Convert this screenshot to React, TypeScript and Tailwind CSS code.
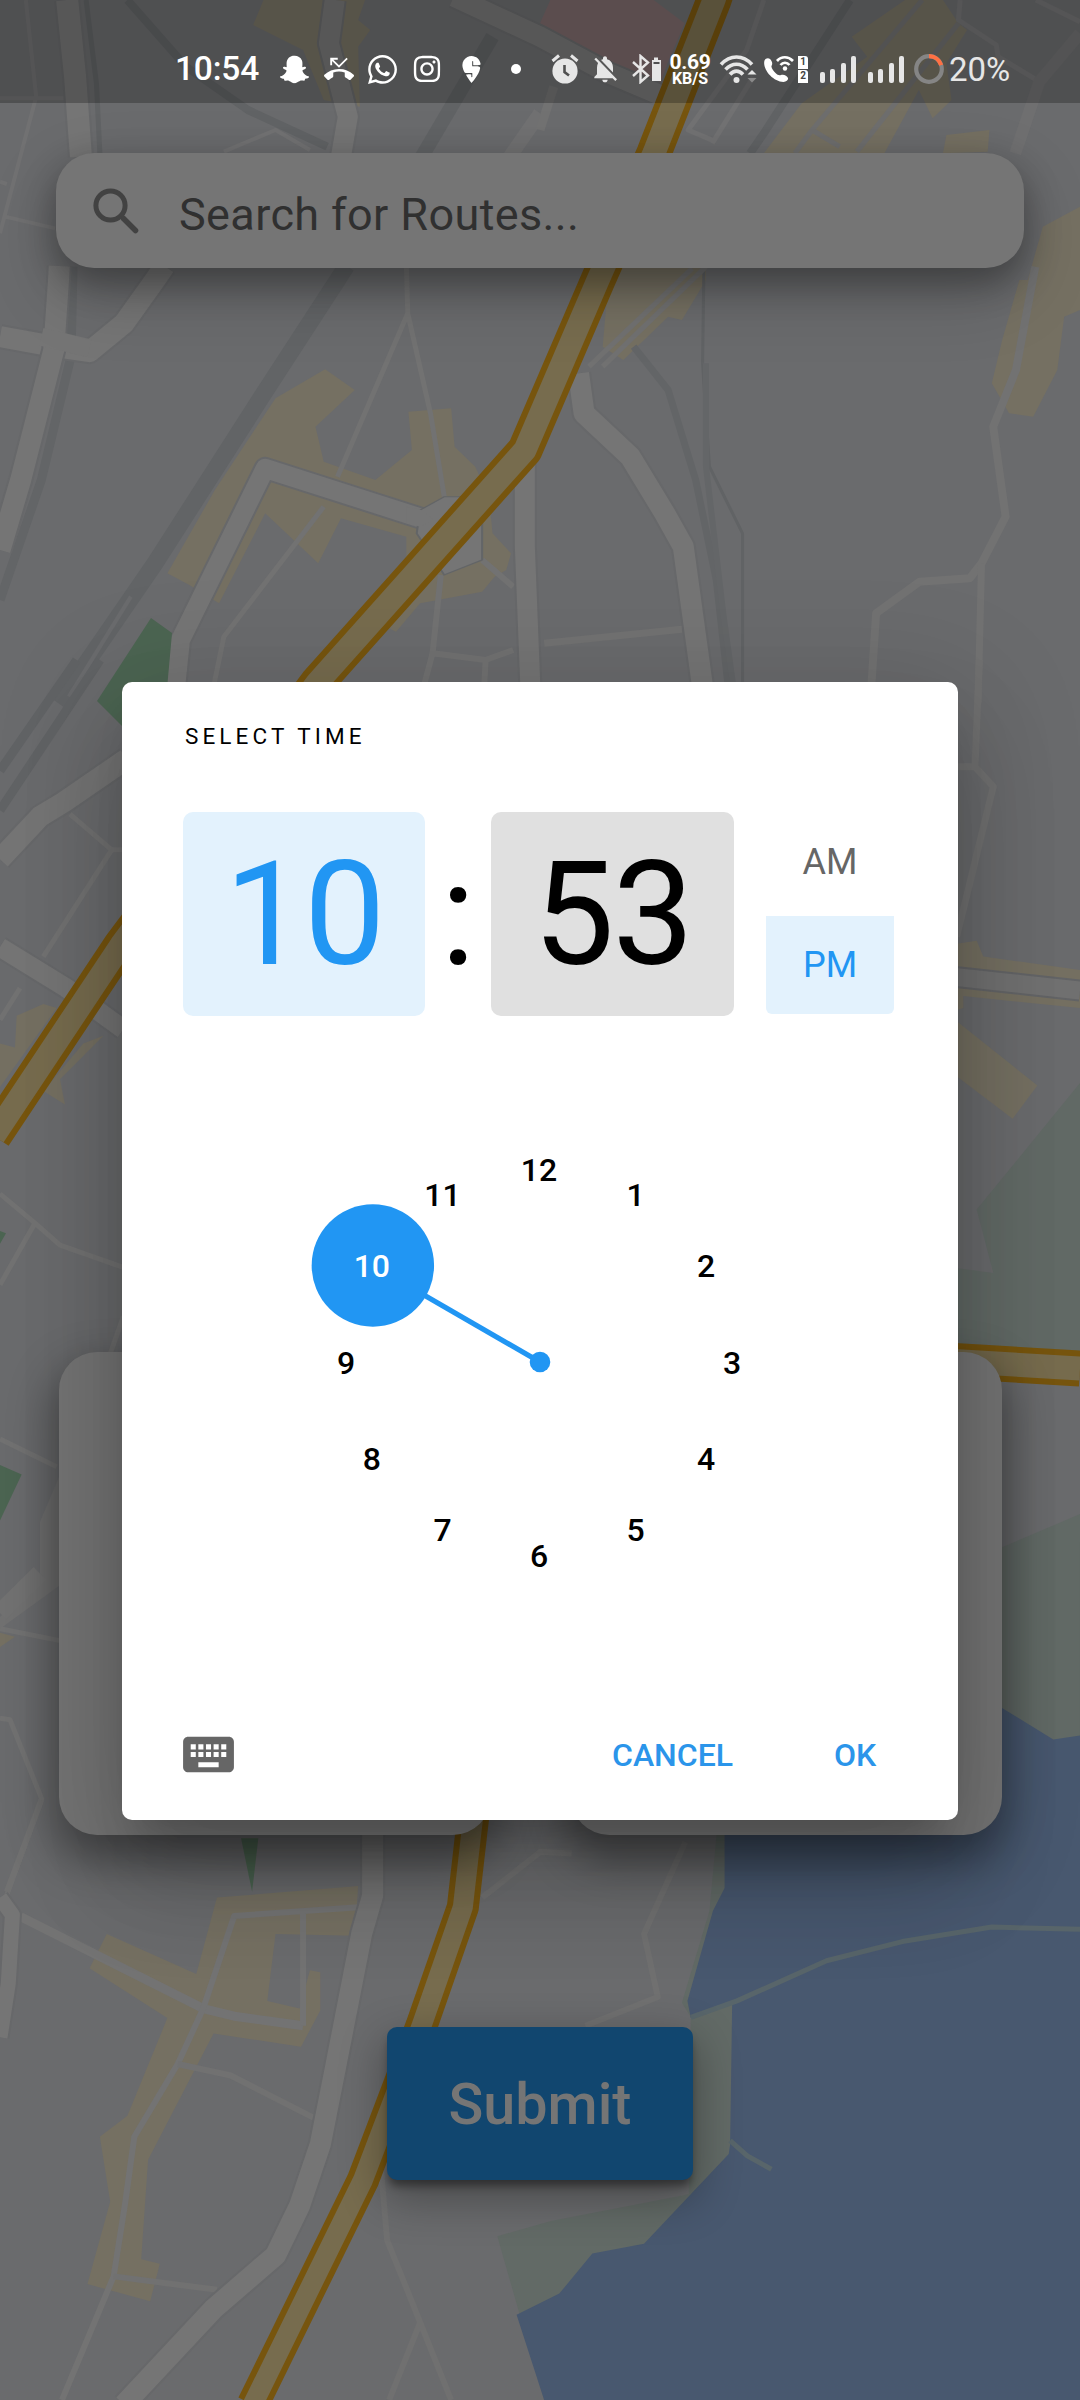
import React from "react";
import { FaSnapchatGhost, FaWhatsapp, FaInstagram } from "react-icons/fa";
import { MdPhoneMissed, MdNotificationsOff, MdKeyboard } from "react-icons/md";
import { SiSwiggy } from "react-icons/si";

const LAND = "#6a6b6d";
const ROAD = "#757575";
const EDGE = "#616365";
const BEIGE = "#757062";
const PARK = "#4c6552";
const PALE = "#626a66";
const WATER = "#48586f";

type LineProps = { d: string; w: number; c?: string };

function Line({ d, w, c = ROAD }: LineProps) {
  return (
    <path d={d} fill="none" stroke={c} strokeWidth={w} strokeLinejoin="round" vectorEffect="non-scaling-stroke" />
  );
}

function Street({ d, w }: LineProps) {
  return (
    <>
      <Line d={d} w={w + 4} c="#67686a" />
      <Line d={d} w={w} c="#757575" />
    </>
  );
}

function Highway({ d, w }: LineProps) {
  return (
    <>
      <Line d={d} w={w} c="#77550e" />
      <Line d={d} w={w - 12} c="#776c4e" />
    </>
  );
}

function MapTiles() {
  return (
    <svg className="absolute inset-0" width="1080" height="2400" viewBox="0 0 1080 2400" aria-hidden="true">
      <rect width="1080" height="2400" fill={LAND} />

      <g transform="scale(.34439 .33333)">
        <path d="M765 0H1060L1040 60 1075 90 1040 140 1045 320 940 300 880 150 735 75Z" fill={BEIGE} />
        <Line d="M75 0 105 290 0 700M0 295H185M0 545 20 552M15 650 160 685" w={4} c="#717172" />
        <Line d="M250 0 280 250 290 460" w={5} c={EDGE} />
        <Line d="M370 0 540 200 720 330 950 440" w={8} c={EDGE} />
        <Street d="M195 0 218 230 235 470" w={22} />
        <Street d="M972 0 955 130 1010 350 990 470" w={20} />
        <Line d="M650 455 800 390 900 450" w={4} c="#727273" />
        <Line d="M1430 110 1225 470" w={14} c={EDGE} />
        <Line d="M1568 340 1480 470" w={14} c="#717172" />
      </g>

      <g transform="translate(540 0) scale(.34439 .33333)">
        <path d="M0 70 30 0H330L420 70 370 190 340 280 200 190Z" fill="#7a6769" />
        <path
          d="M1060 0H1170L1215 70 1240 90 1180 190 1195 300 1140 355 1100 270 1000 460H650L760 310 950 170 905 110Z"
          fill={BEIGE}
        />
        <path d="M1180 405 1305 390 1300 455 1170 460Z" fill={BEIGE} />
        <path d="M1568 620 1460 680 1400 900H1568Z" fill={BEIGE} />
        <Street d="M-250 -10 0 110 200 220 360 290" w={20} />
        <Line d="M0 390 40 260" w={9} c="#727272" />
        <Line d="M650 0 600 150 430 390 510 425" w={5} c="#727273" />
        <Line d="M620 230 500 430" w={5} c="#727273" />
        <Line d="M1220 0 1215 60 1325 135 1330 170 1450 245M1440 0 1568 65" w={5} c="#727273" />
        <Line d="M1568 100 1450 245 1380 460" w={12} c="#6f6f70" />
        <Line d="M900 0 650 400 610 460" w={8} c={EDGE} />
        <Line d="M1110 0 790 390 740 460M790 390 870 440M1215 70 920 455" w={5} c="#6e6e6e" />
      </g>

      <g transform="translate(0 280) scale(.68878 .33333)">
        <Line d="M503 -42 490 0 380 350 225 850 85 1270" w={17} c="#626466" />
        <Line d="M190 950 100 1250" w={4} c={LAND} />
        <Line d="M106 -40 103 230 60 600 0 960" w={9} c="#636567" />
        <path
          d="M472 268 515 330 458 440 470 545 545 600 598 510 593 395 655 385 660 500 690 560 710 650 715 760 742 820 735 870 718 890 700 935 610 970 575 1055 560 1040 590 900 590 770 495 715 462 850 385 700 318 970 275 915 243 880 312 630 400 355Z"
          fill={BEIGE}
        />
        <path d="M885 -40H1025V0L990 120 970 110 905 240 875 200Z" fill={BEIGE} />
        <path d="M1480 0H1568V90L1545 110 1535 270 1500 410 1465 400 1440 310 1455 180Z" fill={BEIGE} />
        <Line d="M1022 -40 1020 250 1030 560 1078 760V1270" w={3} c="#616365" />
        <Line d="M920 200 970 330 1010 600 1040 900 1060 1270" w={7} c="#636567" />
        <Line d="M1025 250V560L1050 1000 1068 1270" w={6} c="#646668" />
        <Street d="M239 -42 225 0 180 130 130 215 80 200 0 170" w={21} />
        <Street d="M86 -42 85 0 78 210 30 600 0 810" w={21} />
        <Line d="M60 170 130 205" w={18} />
        <Line d="M590 -40 592 100 490 590M592 100 625 400 645 650M470 680 325 1070 310 1220" w={5} c="#727272" />
        <Line d="M640 885 628 1120 615 1220M628 1120 705 1140 745 1110M705 1140 703 1220M700 840 745 920" w={6} c="#727272" />
        <Street d="M255 1220 262 1080 385 565 612 715" w={19} />
        <path d="M610 690 645 650H700V840L645 885 605 760Z" fill={ROAD} stroke="#636567" strokeWidth="3" />
        <path d="M590 680 612 690 630 720 610 740 590 730Z" fill={ROAD} />
        <Street d="M762 540V800L770 1220" w={20} />
        <Street d="M840 280 848 400 915 530 965 700 992 800 1020 1220" w={21} />
        <Line d="M790 1090 990 1048" w={7} c="#727272" />
        <Line d="M855 260 1005 -35M875 260 1025 -40" w={5} c="#717171" />
        <Line d="M1503 -40 1475 270 1442 440 1460 710 1425 850 1408 895 1335 905 1272 1000 1265 1220" w={8} c="#727272" />
        <Line d="M1425 850 1420 1270" w={7} c="#727272" />
      </g>
      <path d="M151 618 172 633 166 700 123 727 97 701Z" fill={PARK} />

      <g transform="translate(0 660) scale(.33333 .79082)">
        <Line d="M0 140 230 0M0 190 300 0" w={9} c="#616365" />
        <Street d="M0 252 120 198 190 180 380 125" w={21} />
        <Line d="M210 195 335 240H370M335 240 130 375M0 455 60 415" w={5} c="#727272" />
        <path d="M50 450 130 435 170 440 0 540V485L45 490Z" fill={BEIGE} />
        <path d="M130 545 250 485 310 475 180 530 195 562Z" fill={BEIGE} />
        <Street d="M0 363 200 415 370 467" w={19} />
        <Line d="M0 675 105 712 180 740 370 768M105 712 0 790M0 985 170 1020" w={5} c="#727272" />
        <path d="M0 722 18 725 0 738Z" fill={PARK} />
        <path d="M0 1018 65 1030 0 1088Z" fill={PARK} />
        <path d="M0 1210 120 1160 120 1090 180 1030V1170L0 1225Z" fill="#717171" />
        <Line d="M0 1205 120 1155" w={18} c="#727272" />
        <Line d="M0 1225 180 1240M0 1338 30 1340 125 1440 15 1568M320 890 370 830" w={5} c="#727272" />
        <path d="M0 1230 45 1235 0 1248Z" fill={BEIGE} />
      </g>

      <g transform="translate(950 660) scale(.33333 .79082)">
        <path d="M390 535 80 695 130 775 0 768V870L390 875Z" fill={PALE} />
        <path d="M0 1150 390 1080V1365H0Z" fill={PALE} />
        <path d="M-680 1568V1290L155 1325 310 1365 390 1360V1568Z" fill={WATER} />
        <Line d="M88 0 75 135H0M75 135 130 160 20 350" w={7} c="#717171" />
        <path d="M0 360 80 355 100 375 390 392V440L40 425V440L0 445Z" fill={BEIGE} />
        <Line d="M0 400 390 418" w={22} c="#636466" />
        <Line d="M0 400 390 418" w={18} c="#717171" />
        <path d="M0 450 262 538 188 580 0 520Z" fill={BEIGE} />
        <Highway d="M0 886 390 896" w={36} />
      </g>

      <g transform="translate(0 1800) scale(.68878 .38265)">
        <path
          d="M1045 0H1568V1568H790L722 1140 800 1100 1000 1030 1003 568 990 530 1030 290Z"
          fill={PALE}
        />
        <path
          d="M1052 0V230L1035 290 998 525 1003 570 1063 530 1060 900 1058 925 935 1160 860 1185 812 1290 750 1345 790 1568H1568V0Z"
          fill={WATER}
        />
        <Line d="M1003 568 1070 525 1200 420 1310 370 1440 332 1568 338M1060 890 1085 930 1120 965" w={5} c="#58656a" />
        <path d="M350 100H375L366 240Z" fill={PARK} />
        <path
          d="M315 255 520 225 515 355 400 350 388 525 435 545 450 445 465 450V550L437 645 310 610 215 940 205 1200 232 1212 218 1310 127 1265 160 1050 145 880 185 825 243 570 130 440 155 350 285 455Z"
          fill={BEIGE}
        />
        <Line d="M30 305 295 545 340 565 440 590" w={9} c="#737373" />
        <Line d="M520 280 340 303 295 545 258 690 195 880 182 1050 165 1245 90 1568M440 285V590" w={6} c="#737373" />
        <Line d="M258 690 335 720 455 830M165 1245 315 1280M60 0 10 240" w={6} c="#717171" />
        <Line d="M700 255 785 135 830 140M995 110 935 350 955 515 850 590" w={6} c="#707070" />
        <Line d="M553 960 562 1150 610 1365 655 1568M610 1365 565 1568" w={6} c="#707070" />
        <Street d="M0 255 18 300 12 480 0 620" w={15} />
        <Street d="M541 0V250L525 350 487 700 465 900 435 1060 400 1190 310 1330 180 1580" w={21} />
        <Highway d="M690 0 684 90 672 280 612 590 527 993 367 1580" w={32} />
      </g>
      <Highway d="M718 -12 714 0 654 153 598 280 525 450 317 683 121 945 -6 1136" w={35} />
    </svg>
  );
}

function AlarmIcon() {
  return (
    <svg className="ml-[36px]" width="28" height="30" viewBox="0 0 28 30" fill="none">
      <circle cx="14" cy="17" r="12.6" fill="#e6e6e6" />
      <path d="M1.5 7 8 1.5M26.500 7 20 1.500" stroke="#e6e6e6" strokeWidth="3" />
      <path d="M13.500 11V18L18 21.500" stroke="#505050" strokeWidth="2.600" />
    </svg>
  );
}

function BluetoothIcon() {
  return (
    <svg className="ml-[10px]" width="31" height="30" viewBox="0 0 31 30" fill="none">
      <path d="M2 8 17 21.500 9.500 28V2L17 8.500 2 22" stroke="#e6e6e6" strokeWidth="2.400" />
      <path d="M23 3.500H27V6H30V27H21V6H23Z" fill="#e6e6e6" />
      <path d="M22.500 9H28.500" stroke="#505050" strokeWidth="2" />
    </svg>
  );
}

function WifiIcon() {
  return (
    <svg className="ml-[7px]" width="38" height="32" viewBox="0 0 38 32" fill="none">
      <path d="M2 11.500C11 1.500 24 1.500 33 11.500" stroke="#e6e6e6" strokeWidth="3.600" />
      <path d="M6.500 16.500C13 9.500 22 9.500 28.500 16.500" stroke="#e6e6e6" strokeWidth="3.600" />
      <path d="M11 21.500C15 17 20 17 24 21.500" stroke="#e6e6e6" strokeWidth="3.600" />
      <circle cx="17.500" cy="27" r="3" fill="#e6e6e6" />
      <path d="M28.500 21.500 33 17 37.500 21.500Z" fill="#e6e6e6" />
      <path d="M28.500 25 33 29.500 37.500 25Z" fill="#8a8a8a" />
    </svg>
  );
}

function WifiCallIcon() {
  return (
    <svg className="ml-[6px]" width="31" height="30" viewBox="0 0 31 30" fill="none">
      <path
        d="M1.500 6.500C2.500 4.500 5 3.500 7 5C9 7 10 9.500 8.500 12C8 14 10.500 17 12.500 19C14.500 21 16 21.500 18 21C21 20 24 22 25 24C25.500 26 23.500 28 20.500 28C10 28-1 15 1.500 6.500Z"
        fill="#fff"
      />
      <path d="M14 7C18.500 2 25 2 30 7M17.500 11C20 8 24 8 26.500 11" stroke="#fff" strokeWidth="2.700" />
      <circle cx="22" cy="14.500" r="2.200" fill="#fff" />
    </svg>
  );
}

function SimBadges() {
  return (
    <div className="ml-[4px] flex flex-col gap-px text-[10px] font-bold leading-none text-[#444]">
      <span className="flex h-[13px] w-[10px] items-center justify-center rounded-tr-[3px] bg-white">1</span>
      <span className="flex h-[13px] w-[10px] items-center justify-center rounded-tr-[3px] bg-white">2</span>
    </div>
  );
}

function SignalBars() {
  return (
    <div className="flex h-[27px] w-9 items-end justify-between">
      <span className="h-[11px] w-[5px] rounded-[2px] bg-[#e6e6e6]" />
      <span className="h-[14px] w-[5px] rounded-[2px] bg-[#e6e6e6]" />
      <span className="h-5 w-[5px] rounded-[2px] bg-[#e6e6e6]" />
      <span className="h-[27px] w-[5px] rounded-[2px] bg-[#e6e6e6]" />
    </div>
  );
}

function BatteryRing() {
  return (
    <svg className="ml-[10px]" width="30" height="30" viewBox="0 0 30 30" fill="none">
      <circle cx="15" cy="15" r="12.800" stroke="#858585" strokeWidth="4.200" />
      <path d="M15 2.200A12.800 12.800 0 0 1 27.170 11.040" stroke="#ff7043" strokeWidth="4.200" />
    </svg>
  );
}

function StatusBar() {
  return (
    <header className="h-[103px] bg-black/25 pl-[175px] pt-[52px] text-white">
      <div className="flex h-[34px] items-center">
        <span className="w-[85px] text-[33.5px] font-medium leading-none tracking-[-0.2px]">10:54</span>
        <FaSnapchatGhost className="ml-[20px]" size={29} />
        <MdPhoneMissed className="ml-[15px]" size={30} />
        <FaWhatsapp className="ml-[12px]" size={33} />
        <FaInstagram className="ml-[13px]" size={30} />
        <SiSwiggy className="ml-[16px]" size={27} />
        <span className="ml-[26px] size-[10px] rounded-full bg-white" />
        <div className="-ml-[6px] flex items-center">
          <AlarmIcon />
          <MdNotificationsOff className="ml-[10px] text-[#e6e6e6]" size={32} />
          <BluetoothIcon />
        </div>
        <div className="ml-[6px] flex w-[44px] flex-col items-center pt-[3px]">
          <span className="text-[21px] font-bold leading-[17px] tracking-[-0.3px]">0.69</span>
          <span className="text-[16px] font-bold leading-[16px]">KB/S</span>
        </div>
        <WifiIcon />
        <WifiCallIcon />
        <SimBadges />
        <div className="ml-[12px] flex gap-3">
          <SignalBars />
          <SignalBars />
        </div>
        <BatteryRing />
        <span className="ml-[5px] text-[33px] leading-none text-[#e6e6e6]">20%</span>
      </div>
    </header>
  );
}

function SearchBar() {
  return (
    <div className="mx-[56px] mt-[50px] flex h-[115px] items-center rounded-[38px] bg-[#757575] pl-[37px] shadow-[0_14px_34px_2px_rgba(0,0,0,0.3),0_26px_70px_rgba(0,0,0,0.18)]">
      <svg width="46" height="46" viewBox="0 0 46 46" fill="none" stroke="#424242" strokeLinecap="round">
        <circle cx="17.500" cy="17.500" r="14.600" strokeWidth="5" />
        <path d="M30.500 30.500 42.500 42.500" strokeWidth="5.500" />
      </svg>
      <span className="ml-[40px] pt-[8px] text-[45px] leading-none tracking-[0.38px] text-[#303030]">
        Search for Routes...
      </span>
    </div>
  );
}

function RouteCards() {
  return (
    <div className="ml-[59px] mt-[1084px] flex h-[483px] gap-[80px]">
      <div className="w-[432px] rounded-[38px] bg-[#757575] shadow-[0_20px_44px_6px_rgba(0,0,0,0.38)]" />
      <div className="w-[431px] rounded-[38px] bg-[#757575] shadow-[0_20px_44px_6px_rgba(0,0,0,0.38)]" />
    </div>
  );
}

function PeriodToggle() {
  return (
    <div className="ml-8 flex w-[128px] flex-col text-[36px] leading-none">
      <button className="h-[104px] pb-[5px] text-[#666]">AM</button>
      <button className="h-[98px] rounded-b-[6px] bg-[#e3f2fd] text-[#2196f3]">PM</button>
    </div>
  );
}

const RADIUS = 193;
const HOURS = [12, 1, 2, 3, 4, 5, 6, 7, 8, 9, 10, 11];

function ClockDial({ selected }: { selected: number }) {
  return (
    <div className="relative mx-auto mt-[90px] h-[512px] w-[512px]">
      <svg className="absolute inset-0" width="512" height="512" viewBox="-256 -256 512 512">
        <path d="M0 0-167.140-96.500" stroke="#2196f3" strokeWidth="5.200" />
        <circle r="10.300" fill="#2196f3" />
        <circle cx="-167.140" cy="-96.500" r="61.200" fill="#2196f3" />
      </svg>
      {HOURS.map((hour, i) => {
        const angle = (i * Math.PI) / 6;
        return (
          <span
            key={hour}
            className={
              hour === selected
                ? "absolute flex h-16 w-16 -translate-x-1/2 -translate-y-1/2 items-center justify-center text-[32px] font-medium leading-none text-white"
                : "absolute flex h-16 w-16 -translate-x-1/2 -translate-y-1/2 items-center justify-center text-[32px] font-medium leading-none text-black"
            }
            style={{ left: 255 + RADIUS * Math.sin(angle), top: 256.5 - RADIUS * Math.cos(angle) }}
          >
            {hour}
          </span>
        );
      })}
    </div>
  );
}

function TimePickerDialog() {
  return (
    <div className="absolute inset-0 flex items-start justify-center pt-[682px]">
      <section
        role="dialog"
        className="flex h-[1138px] w-[836px] flex-col rounded-[10px] bg-white pt-[43px] shadow-[0_28px_39px_-18px_rgba(0,0,0,0.2),0_62px_98px_8px_rgba(0,0,0,0.14),0_23px_118px_21px_rgba(0,0,0,0.12)]"
      >
        <h1 className="ml-[63px] text-[22.5px] leading-[22px] tracking-[4.1px] text-black">SELECT TIME</h1>
        <div className="ml-[61px] mt-[65px] flex h-[204px]">
          <div className="flex w-[242px] items-center justify-center rounded-[10px] bg-[#e3f2fd] text-[145px] leading-none tracking-[-2px] text-[#2196f3]">
            10
          </div>
          <div className="flex w-[66px] items-center justify-center text-[145px] leading-none text-black">:</div>
          <div className="flex w-[243px] items-center justify-center rounded-[10px] bg-[#e0e0e0] text-[145px] leading-none tracking-[-2px] text-black">
            53
          </div>
          <PeriodToggle />
        </div>
        <ClockDial selected={10} />
        <div className="mt-[105px] flex h-[62px] items-center pl-[56px] text-[32px] font-medium leading-none text-[#2b95ea]">
          <MdKeyboard size={61} className="text-[#666]" />
          <button className="ml-[373px] pt-[2px]">CANCEL</button>
          <button className="ml-[101px] pt-[2px]">OK</button>
        </div>
      </section>
    </div>
  );
}

export default function App() {
  return (
    <main className="relative h-[2400px] w-[1080px] overflow-hidden font-['Roboto',sans-serif]">
      <MapTiles />
      <div className="relative flex flex-col">
        <StatusBar />
        <SearchBar />
        <RouteCards />
        <button className="ml-[387px] mt-[192px] h-[153px] w-[306px] rounded-[10px] bg-[#11466f] pt-[2px] text-[57.5px] font-medium leading-none text-[#757575] shadow-[0_8px_8px_-2px_rgba(0,0,0,0.4),0_16px_44px_4px_rgba(0,0,0,0.3)]">
          Submit
        </button>
      </div>
      <TimePickerDialog />
    </main>
  );
}
